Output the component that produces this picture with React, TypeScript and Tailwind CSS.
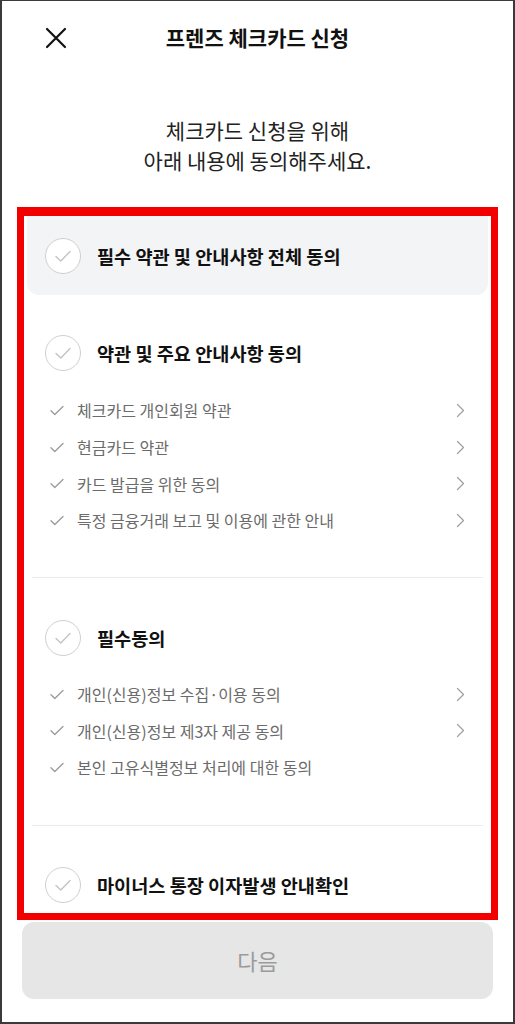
import React from 'react';

const font = { fontFamily: '"Noto Sans CJK KR", "Noto Sans", sans-serif' };

const CircleCheck = () => (
  <span className="flex h-[36px] w-[36px] shrink-0 items-center justify-center rounded-full border border-[#cfcfcf] bg-white">
    <svg width="18" height="14" viewBox="0 0 18 14" fill="none">
      <path d="M2 7.5 L6.8 12 L16 2.5" stroke="#c4c4c4" strokeWidth="1.4" strokeLinecap="round" strokeLinejoin="round" />
    </svg>
  </span>
);

const SmallCheck = () => (
  <svg width="14" height="11" viewBox="0 0 14 11" fill="none" className="shrink-0">
    <path d="M1 5.8 L4.8 9.5 L13 1.5" stroke="#9a9a9a" strokeWidth="1.3" strokeLinecap="round" strokeLinejoin="round" />
  </svg>
);

const Chevron = () => (
  <svg width="9" height="15" viewBox="0 0 9 15" fill="none">
    <path d="M1.5 1.5 L7.5 7.5 L1.5 13.5" stroke="#a0a0a0" strokeWidth="1.3" strokeLinecap="round" strokeLinejoin="round" />
  </svg>
);

const Heading = ({ text }: { text: string }) => (
  <div className="flex items-center gap-[16px] pl-[21px]">
    <CircleCheck />
    <span className="text-[18.6px] font-bold text-[#111]">{text}</span>
  </div>
);

const Item = ({ text, arrow = true }: { text: string; arrow?: boolean }) => (
  <div className="flex h-[36.7px] items-center pl-[26px] pr-[26px]">
    <SmallCheck />
    <span className="ml-[13px] flex-1 text-[16px] text-[#6b6b6b]">{text}</span>
    {arrow && <Chevron />}
  </div>
);

export default function App() {
  return (
    <div className="h-[1024px] w-[515px] overflow-hidden border-x-2 border-b-2 border-t border-[#3a3a3a] bg-white" style={font}>
      {/* Header */}
      <div className="relative flex h-[74px] items-center justify-center">
        <svg width="22" height="22" viewBox="0 0 22 22" className="absolute left-[43px] top-[26px]">
          <path d="M2 2 L20 20 M20 2 L2 20" stroke="#111" strokeWidth="2.2" strokeLinecap="round" />
        </svg>
        <h1 className="text-[21px] font-bold text-[#111]">프렌즈 체크카드 신청</h1>
      </div>

      <div className="mt-[40px] text-center text-[21px] leading-[30px] text-[#222]">
        <p>체크카드 신청을 위해</p>
        <p>아래 내용에 동의해주세요.</p>
      </div>

      {/* Agreement list */}
      <div className="mx-[15px] mt-[32px] h-[713px] overflow-hidden border-[7px] border-t-[9px] border-[#f20000]">
        <div className="mx-[3px] flex h-[79px] items-center rounded-b-[12px] bg-[#f3f4f6] pl-[18px]">
          <div className="flex items-center gap-[16px]">
            <CircleCheck />
            <span className="text-[18.6px] font-bold text-[#111]">필수 약관 및 안내사항 전체 동의</span>
          </div>
        </div>

        <div className="pt-[40px]">
          <Heading text="약관 및 주요 안내사항 동의" />
          <div className="mt-[21px]">
            <Item text="체크카드 개인회원 약관" />
            <Item text="현금카드 약관" />
            <Item text="카드 발급을 위한 동의" />
            <Item text="특정 금융거래 보고 및 이용에 관한 안내" />
          </div>
        </div>

        <div className="mx-[8px] mt-[38px] h-px bg-[#ececec]" />

        <div className="pt-[42px]">
          <Heading text="필수동의" />
          <div className="mt-[20px]">
            <Item text="개인(신용)정보 수집·이용 동의" />
            <Item text="개인(신용)정보 제3자 제공 동의" />
            <Item text="본인 고유식별정보 처리에 대한 동의" arrow={false} />
          </div>
        </div>

        <div className="mx-[8px] mt-[39px] h-px bg-[#ececec]" />

        <div className="pt-[41px]">
          <Heading text="마이너스 통장 이자발생 안내확인" />
        </div>
      </div>

      <div className="mx-[20px] mt-[2px] flex h-[77px] items-center justify-center rounded-[12px] bg-[#e6e6e6]">
        <span className="text-[22px] text-[#9b9b9b]">다음</span>
      </div>
    </div>
  );
}
